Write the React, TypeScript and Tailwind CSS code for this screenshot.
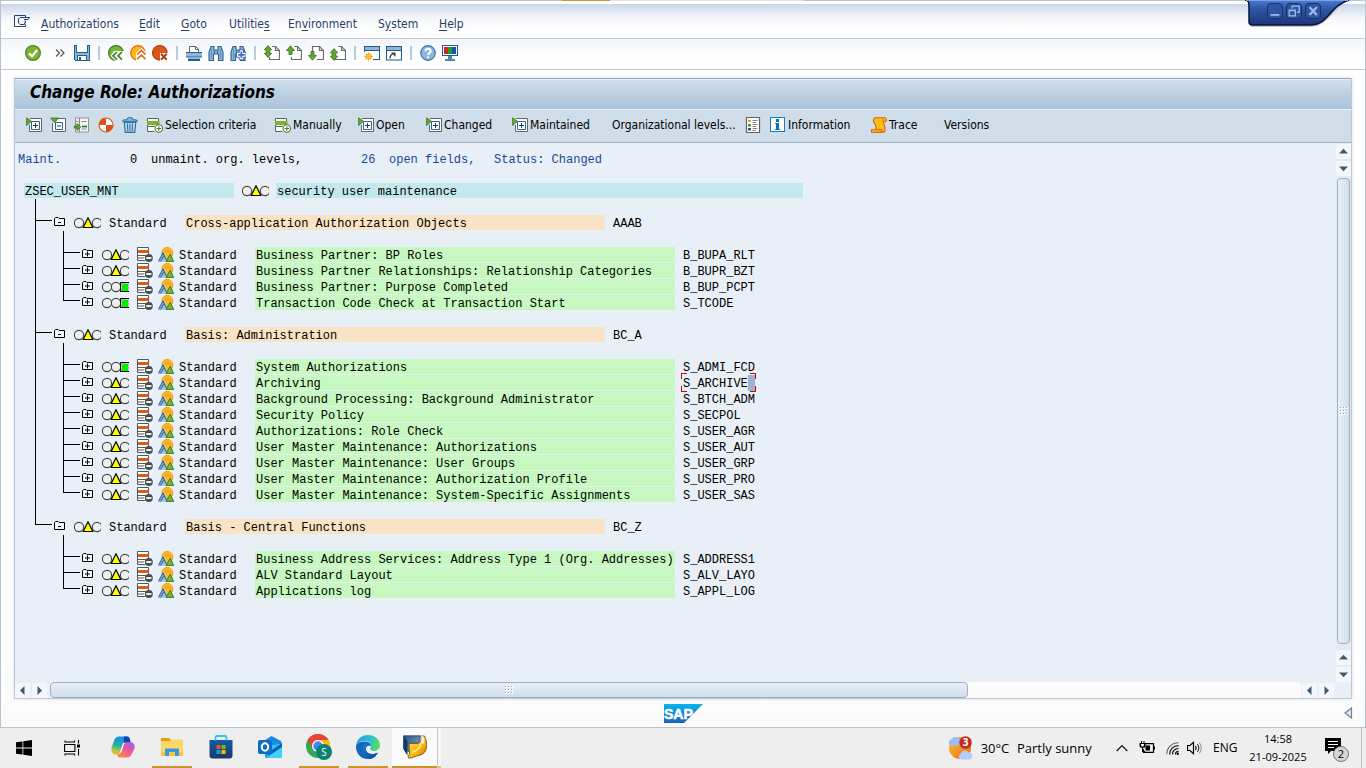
import type { ReactNode } from "react";

/* ---------- shared svg wrapper ---------- */

function Icon({ children, crisp, className = "size-4" }: { children: ReactNode; crisp?: boolean; className?: string }) {
  return (
    <svg viewBox="0 0 16 16" fill="none" shapeRendering={crisp ? "crispEdges" : "auto"} className={`block shrink-0 ${className}`} aria-hidden="true">
      {children}
    </svg>
  );
}

/* ---------- system toolbar icons ---------- */

const EnterIcon = () => (
  <Icon>
    <circle cx="8" cy="8" r="7.4" fill="#7ab32e" stroke="#4b8a2a" strokeWidth="1.2" />
    <path d="M4 8.3 7 11.2l5.200-6.200" stroke="#fff" strokeWidth="2.3" />
  </Icon>
);
const SaveIcon = () => (
  <Icon crisp>
    <path d="M0 0h16v16H1l-1-1z" fill="#1d5f93" />
    <path d="M1 1h2v7h10V1h2v14H1z" fill="#8fb5d8" />
    <path d="M3 0h10v7H3z" fill="#fff" />
    <path d="M2 0h1v8H2zM13 0h1v8h-1zM2 7h12v1H2zM3 10h10v6H3z" fill="#1d5f93" />
    <path d="M4 11h8v4H4z" fill="#fff" />
    <path d="M5 12h2v3H5z" fill="#1d5f93" />
  </Icon>
);
const BackIcon = () => (
  <Icon>
    <circle cx="8" cy="8" r="7.4" fill="#7ab32e" stroke="#3f7d2c" strokeWidth="1.2" />
    <path d="M6 6h10v10H7.500L2.500 11z" fill="#fff" />
    <path d="M9 7 5 10.800 9 14.600M14 7l-4 3.800 4 3.800" stroke="#3f7d2c" strokeWidth="1.7" />
  </Icon>
);
const ExitIcon = () => (
  <Icon>
    <circle cx="8" cy="8" r="7.3" fill="#fdb913" stroke="#e0661a" strokeWidth="1.2" />
    <path d="M6 8l5.5-5L16 7v9H6z" fill="#fff" />
    <path d="M7.2 9.5 11.5 5.5l4 4M7.2 14.2l4.3-4 4 4" stroke="#e0661a" strokeWidth="1.7" />
  </Icon>
);
const CancelIcon = () => (
  <Icon>
    <circle cx="7.8" cy="7.8" r="7.3" fill="#dc561a" stroke="#b03d12" strokeWidth="1.1" />
    <path d="M8 8h8v8H8z" fill="#fff" />
    <path d="m9 8.700 5.700 6M14.700 8.700l-5.700 6" stroke="#b03d12" strokeWidth="2" />
  </Icon>
);
const PrintIcon = () => (
  <Icon>
    <path d="M3.500 7V1.500h6L12.500 4v3" fill="#fff" stroke="#666" />
    <path d="M9.500 1.500v3h3" stroke="#666" />
    <path d="M0 8h16v4H0z" fill="#8fb5d8" />
    <path d="M0 7.500h16M0 12h16" stroke="#1d5f93" strokeWidth="1" />
    <path d="M2 15h12" stroke="#1d5f93" strokeWidth="2" />
    <path d="M2 13.500h12" stroke="#8fb5d8" strokeWidth="1" />
  </Icon>
);
const Binoculars = () => (
  <>
    <path d="M1 15.5V7l2-5.5h3V5h4V1.5h3L15 7v8.500h-4.500V9h-5v6.500z" fill="#8fb5d8" stroke="#2b6496" strokeWidth="1.1" />
    <path d="M3.500 4v10M12.500 4v10" stroke="#5d92bf" />
    <path d="M6.500 5.500v3M9.500 5.500v3" stroke="#2b6496" />
  </>
);
const FindIcon = () => <Icon><Binoculars /></Icon>;
const FindNextIcon = () => (
  <Icon>
    <Binoculars />
    <path d="M9.300 4.800h4.200v2.500H16v5h-2.500v2.500H9.300v-2.500H6.500v-5h2.800z" fill="#fff" stroke="#2d4fa5" strokeWidth=".800" />
    <path d="M11.400 6.500v6.500M8.200 9.800h6.500" stroke="#3d68c0" strokeWidth="1.800" />
  </Icon>
);

function PageIcon({ up, down, side }: { up?: boolean; down?: boolean; side: "double" | "up" | "down" | "last" }) {
  return (
    <Icon>
      <path d={side === "down" ? "M4.500 7V1.500h7l4 4v9H9" : "M8 1.500h3.500l4 4v9h-10V12"} fill="#fff" stroke="#6b6b6b" strokeWidth="1.200" />
      <path d="M11.500 1.500v4h4" stroke="#6b6b6b" strokeWidth="1.200" />
      {side === "double" && <path d="M.400 4.800 4 .600l3.600 4.200H5.800v3.400h1.800L4 12.400.400 8.200h1.800V4.800z" fill="#6aa52c" stroke="#35752b" strokeWidth=".900" />}
      {side === "last" && <path d="M.400 7.800 4 3.600l3.600 4.200H5.800v3.400h1.800L4 15.400.400 11.200h1.800V7.800z" fill="#6aa52c" stroke="#35752b" strokeWidth=".900" />}
      {up && <path d="M.500 5.500 4.500 .800l4 4.700H6V9.500H3v-4z" fill="#6aa52c" stroke="#35752b" strokeWidth=".900" />}
      {down && <path d="M.500 10.500 4.500 15.200l4-4.700H6V6.500H3v4z" fill="#6aa52c" stroke="#35752b" strokeWidth=".900" />}
    </Icon>
  );
}
const SessionIcon = () => (
  <Icon>
    <path d="M.500 1.500h15v13H.500z" fill="#fff" stroke="#1d5f93" strokeWidth="1.100" />
    <path d="M1 2h14v3H1z" fill="#8fb5d8" />
    <path d="M1 5.500h14" stroke="#1d5f93" strokeWidth="1" />
    <path d="M0 7h9v9H0z" fill="#fff" />
    <path d="M4.500 7.500v8M.500 11.500h8M1.700 8.700l5.600 5.600M7.300 8.700l-5.600 5.600" stroke="#f59a0c" strokeWidth="1.300" />
    <circle cx="4.500" cy="11.500" r="2" fill="#ffc21a" />
  </Icon>
);
const ShortcutIcon = () => (
  <Icon>
    <path d="M.500 1.500h15v13.500H.500z" fill="#fff" stroke="#1d5f93" strokeWidth="1.100" />
    <path d="M1 2h14v3H1z" fill="#8fb5d8" />
    <path d="M1 5.500h14" stroke="#1d5f93" strokeWidth="1" />
    <path d="M4 13.500c0-2.500 1-4 3.500-4.800" stroke="#444" strokeWidth="1.400" />
    <path d="M5 7.500h4.500V12z" fill="#444" />
  </Icon>
);
const HelpIcon = () => (
  <Icon>
    <circle cx="8" cy="8" r="7.300" fill="#8fb5d8" stroke="#3d76a6" strokeWidth="1.200" />
    <path d="M5.500 6.200C5.500 3 10.700 3 10.700 6c0 2-2.600 2-2.600 4" stroke="#fff" strokeWidth="1.900" />
    <circle cx="8.100" cy="12.300" r="1.100" fill="#fff" />
  </Icon>
);
const LayoutIcon = () => (
  <Icon crisp>
    <path d="M0 0h16v11H0z" fill="#1d5f93" />
    <path d="M1 1h14v9H1z" fill="#fff" />
    <path d="M2 2h4v7H2z" fill="#d8201a" />
    <path d="M6 2h4v7H6z" fill="#27a022" />
    <path d="M10 2h4v7h-4z" fill="#1550c0" />
    <path d="M6 11h4v3H6zM3 14h10v2H3z" fill="#4b86b4" />
  </Icon>
);

/* ---------- application toolbar icons ---------- */

const ExpandIcon = () => (
  <Icon>
    <path d="M4 1.500h11.500v13H3.500V8" fill="#fff" stroke="#5f6468" strokeWidth="1" />
    <path d="M5.500 4.500h8v8h-8z" fill="#fff" stroke="#1d6aa5" strokeWidth="1" />
    <path d="M9.500 6v5M7 8.500h5" stroke="#15406e" strokeWidth="1" />
    <path d="M.600.800 5.500 4.300.600 8.500z" fill="#6aa52c" stroke="#35752b" strokeWidth=".800" />
  </Icon>
);
const CollapseIcon = () => (
  <Icon>
    <path d="M8 1.500h7.500v13h-13V6" fill="#fff" stroke="#5f6468" strokeWidth="1" />
    <path d="M5.500 5.500h7v7h-7z" fill="#fff" stroke="#1d6aa5" strokeWidth="1" />
    <path d="M7 9h4" stroke="#15406e" strokeWidth="1" />
    <path d="M.600 1h8L4.600 5.800z" fill="#6aa52c" stroke="#35752b" strokeWidth=".800" />
  </Icon>
);
const PositionIcon = () => (
  <Icon>
    <path d="M1.500 1h13v14h-13z" fill="#f5f7f8" stroke="#8b9298" strokeWidth="1" />
    <path d="M5.500 1v14M2 4.500h2.500M7.500 4.500h5M7.500 12h5" stroke="#888" strokeWidth="1.100" />
    <path d="M8 9.500h5" stroke="#35752b" strokeWidth="1.800" />
    <path d="M3 6.500 6.800 10 3 13.500V11H.500V9H3z" fill="#6aa52c" stroke="#35752b" strokeWidth=".900" />
  </Icon>
);
const TechIcon = () => (
  <Icon>
    <circle cx="8" cy="8" r="7" fill="#fff" stroke="#d9531a" strokeWidth="1.100" />
    <path d="M8 8V1a7 7 0 0 0-7 7zM8 8v7a7 7 0 0 0 7-7z" fill="#d9531a" />
  </Icon>
);
const TrashIcon = () => (
  <Icon>
    <path d="M2.300 5.500h11.400l-1 9.800H3.300z" fill="#c6dcee" stroke="#2b6fa5" strokeWidth="1.200" />
    <path d="M.500 4.300c0-1.400 2-1.600 4.500-1.600L5.800.800h4.400l.800 1.900c2.500 0 4.500.200 4.500 1.600z" fill="#8fb5d8" stroke="#2b6fa5" strokeWidth="1" />
    <path d="M5.500 6.500l.300 8M8 6.500v8M10.500 6.500l-.300 8" stroke="#2b6fa5" strokeWidth="1.100" />
  </Icon>
);
const InsertRowIcon = () => (
  <Icon>
    <path d="M1 1h10v13.500H1z" fill="#fff" />
    <path d="M11.500 4V1.500H.500V14.500h7" stroke="#5f6468" />
    <path d="M1 9.500h7" stroke="#5f6468" />
    <path d="M0 4h12.500v4H0z" fill="#7ab32e" />
    <circle cx="11.800" cy="11.500" r="3.700" fill="#fff" stroke="#3f7d2c" strokeWidth="1.100" />
    <path d="M11.800 9.300v4.400M9.600 11.500H14" stroke="#3f7d2c" strokeWidth="1.100" />
  </Icon>
);
const LegendIcon = () => (
  <Icon>
    <path d="M1.500.500h13v15h-13z" fill="#fff" stroke="#5f6468" strokeWidth="1.200" />
    <path d="M7.500 3.500h5M7.500 5.500h3.500M7.500 7.500h5M7.500 9.500h3.500M7.500 11.500h5M7.500 13.500h3.500" stroke="#777" strokeWidth=".900" />
    <path d="m3.500 3 2 2M5.500 3l-2 2" stroke="#c98a08" strokeWidth="1.200" />
    <path d="M3 7h3v2.500H3z" fill="#3f9a2c" />
    <path d="M3 11h3v2.500H3z" fill="#1d5f93" />
  </Icon>
);
const InfoIcon = () => (
  <Icon crisp>
    <path d="M0 0h15v15H0z" fill="#1282c4" />
    <path d="M1 1h13v13H1z" fill="#fff" />
    <path d="M6 2h3v3H6zM5 6h4v6h1v1H5v-1h1V7H5z" fill="#0f72b2" />
  </Icon>
);
const TraceIcon = () => (
  <Icon>
    <path d="M4.500 12.500C6.500 9 3.500 7 2.500 4.500 2 2 3.500.800 5 .800h8.500c2.500 0 2.500 3.900 0 3.900h-1c0 3 2.500 5 1.300 9.300-.300 1-1 1.200-2 1.200H2" fill="#fdbe12" stroke="#d3611a" strokeWidth="1.100" />
    <path d="M.500 12.800h9.500c1 0 1 2.400 0 2.400H.500z" fill="#fdbe12" stroke="#d3611a" strokeWidth="1.100" />
    <path d="M12.500 4.500c-1-.500-1-2 0-2" stroke="#d3611a" strokeWidth="1" />
  </Icon>
);

/* ---------- tree icons ---------- */

function FolderIcon({ open }: { open: boolean }) {
  return (
    <svg viewBox="0 0 11 9" className="block h-[9px] w-[11px]" fill="none" aria-hidden="true">
      <path d="M.500 8.500V1.500l1-1h2.500l1 1h5.500v7z" fill="#f3f7fb" stroke="#000" />
      <path d={open ? "M4 5.500h3" : "M3 5h5M5.500 2.500v5"} stroke="#000" />
    </svg>
  );
}

type Light = "yellow" | "green";

function Lights({ state }: { state: Light }) {
  return (
    <svg viewBox="0 0 27 12" className="block h-3 w-[27px] shrink-0" role="img" aria-label={state}>
      <circle cx="5" cy="6" r="4.600" fill="#eef0ee" stroke="#444" strokeWidth="1.100" />
      {state === "green" ? (
        <>
          <circle cx="14" cy="6" r="4.600" fill="#eef0ee" stroke="#444" strokeWidth="1.100" />
          <path d="M18 1h9v10h-9z" fill="#b9c4b9" />
          <path d="M20 3h6v7h-6z" fill="#00f000" />
          <path d="M18.500 11V1.500H27M18 10.500h9" stroke="#000" fill="none" />
        </>
      ) : (
        <>
          <circle cx="23" cy="6" r="4.600" fill="#eef0ee" stroke="#444" strokeWidth="1.100" />
          <path d="M14 .800 18.800 10.500H9.200z" fill="#ffff00" stroke="#000" strokeWidth="1.200" />
        </>
      )}
    </svg>
  );
}
const RemoveRowIcon = () => (
  <Icon>
    <path d="M.600.600h11v13H.600z" fill="#fff" />
    <path d="M8 13.500H.500V.500h11v8M1 8.500h8M1 11h6" stroke="#55595c" />
    <path d="M1 3h10.500v3H1z" fill="#dc561a" />
    <circle cx="11.800" cy="11" r="4" fill="#4b4e50" />
    <path d="M9.200 11h5.200" stroke="#fff" strokeWidth="1.800" />
  </Icon>
);
const OrgIcon = () => (
  <Icon>
    <circle cx="9.300" cy="5.900" r="5.500" fill="#fdb913" stroke="#ef9a1c" strokeWidth="1" />
    <path d="M5.500 7.500a4 4 0 0 1 7.500-1.500" stroke="#ef8f1c" strokeWidth="1" />
    <path d="M.500 15 5.500 4.500l5 10.500z" fill="#9ec3e0" stroke="#e8eff6" strokeWidth=".600" />
    <path d="M.500 14.500 5 6l3.500 7M2.500 14.500 6 8.500" stroke="#2b6496" strokeWidth="1.100" />
    <path d="m8 14.500 4.300-7.500 3.400 7.500z" fill="#7ab32e" stroke="#3f7d2c" strokeWidth="1" />
  </Icon>
);

/* ---------- data ---------- */

type Item = { text: string; code: string; light: Light; focused?: boolean };
type Group = { text: string; code: string; items: Item[] };

const groups: Group[] = [
  {
    text: "Cross-application Authorization Objects",
    code: "AAAB",
    items: [
      { text: "Business Partner: BP Roles", code: "B_BUPA_RLT", light: "yellow" },
      { text: "Business Partner Relationships: Relationship Categories", code: "B_BUPR_BZT", light: "yellow" },
      { text: "Business Partner: Purpose Completed", code: "B_BUP_PCPT", light: "green" },
      { text: "Transaction Code Check at Transaction Start", code: "S_TCODE", light: "green" },
    ],
  },
  {
    text: "Basis: Administration",
    code: "BC_A",
    items: [
      { text: "System Authorizations", code: "S_ADMI_FCD", light: "green" },
      { text: "Archiving", code: "S_ARCHIVE", light: "yellow", focused: true },
      { text: "Background Processing: Background Administrator", code: "S_BTCH_ADM", light: "yellow" },
      { text: "Security Policy", code: "S_SECPOL", light: "yellow" },
      { text: "Authorizations: Role Check", code: "S_USER_AGR", light: "yellow" },
      { text: "User Master Maintenance: Authorizations", code: "S_USER_AUT", light: "yellow" },
      { text: "User Master Maintenance: User Groups", code: "S_USER_GRP", light: "yellow" },
      { text: "User Master Maintenance: Authorization Profile", code: "S_USER_PRO", light: "yellow" },
      { text: "User Master Maintenance: System-Specific Assignments", code: "S_USER_SAS", light: "yellow" },
    ],
  },
  {
    text: "Basis - Central Functions",
    code: "BC_Z",
    items: [
      { text: "Business Address Services: Address Type 1 (Org. Addresses)", code: "S_ADDRESS1", light: "yellow" },
      { text: "ALV Standard Layout", code: "S_ALV_LAYO", light: "yellow" },
      { text: "Applications log", code: "S_APPL_LOG", light: "yellow" },
    ],
  },
];

/* ---------- tree ---------- */

type RailKind = "through" | "end" | "none";

function Rail({ kind }: { kind: RailKind }) {
  if (kind === "none") return <span className="w-px shrink-0" />;
  return <span className={kind === "through" ? "h-4 w-px shrink-0 bg-black" : "h-1.5 w-px shrink-0 bg-black"} />;
}

function Branch({ open, label }: { open: boolean; label: string }) {
  return (
    <>
      <span className="mt-[5px] h-px w-4 shrink-0 bg-black" />
      <button type="button" aria-label={label} className="ml-0.5 mt-0.5 shrink-0">
        <FolderIcon open={open} />
      </button>
    </>
  );
}

function BlankRow({ outer, inner }: { outer: RailKind; inner: RailKind }) {
  return (
    <div className="flex h-4 items-start pl-[17px]">
      <Rail kind={outer} />
      <span className="w-[27px] shrink-0" />
      <Rail kind={inner} />
    </div>
  );
}

function Code({ item }: { item: Item }) {
  if (!item.focused) return <span className="ml-2">{item.code}</span>;
  return (
    <span className="relative ml-2 flex h-4">
      {item.code}
      <span className="h-4 w-[7px] bg-[#9bb3d4]" />
      <span className="absolute -left-0.5 -top-0.5 h-1.5 w-1.5 border-l border-t border-[#d40000]" />
      <span className="absolute -bottom-px -left-0.5 h-1.5 w-1.5 border-b border-l border-[#d40000]" />
      <span className="absolute -right-px -top-0.5 h-1.5 w-1.5 border-r border-t border-[#d40000]" />
      <span className="absolute -bottom-px -right-px h-1.5 w-1.5 border-b border-r border-[#d40000]" />
    </span>
  );
}

function GroupRows({ group, last }: { group: Group; last: boolean }) {
  const outer: RailKind = last ? "none" : "through";
  return (
    <li>
      <div className="flex h-4 items-start pl-[17px]">
        <Rail kind={last ? "end" : "through"} />
        <Branch open label={`Collapse ${group.text}`} />
        <span className="ml-[9px] mt-0.5"><Lights state="yellow" /></span>
        <span className="ml-2 w-[76px] shrink-0">Standard</span>
        <span className="h-[15px] w-[420px] shrink-0 bg-[#fae3c5] pl-px">{group.text}</span>
        <span className="ml-2">{group.code}</span>
      </div>
      <BlankRow outer={outer} inner="through" />
      <ul>
        {group.items.map((item, i) => (
          <li key={item.code} className="flex h-4 items-start pl-[17px]">
            <Rail kind={outer} />
            <span className="w-[27px] shrink-0" />
            <Rail kind={i === group.items.length - 1 ? "end" : "through"} />
            <Branch open={false} label={`Expand ${item.text}`} />
            <span className="ml-[9px] mt-0.5"><Lights state={item.light} /></span>
            <span className="ml-2"><RemoveRowIcon /></span>
            <span className="ml-[5px]"><OrgIcon /></span>
            <span className="ml-[5px] w-[76px] shrink-0">Standard</span>
            <span className="h-[15px] w-[420px] shrink-0 bg-[#c6f8c0] pl-px">{item.text}</span>
            <Code item={item} />
          </li>
        ))}
      </ul>
      {!last && <BlankRow outer="through" inner="none" />}
    </li>
  );
}

function Tree() {
  return (
    <div className="flex-1 overflow-hidden whitespace-pre pl-[3px] pt-2 font-['Liberation_Mono','Courier_New',monospace] text-[12px] leading-[18px] text-black">
      <p className="flex h-4 text-[#17499a]">
        <span className="w-28">Maint.</span>
        <span className="w-[21px] text-black">0</span>
        <span className="w-[210px] text-black">unmaint. org. levels,</span>
        <span className="w-7">26</span>
        <span className="w-[105px]">open fields,</span>
        <span>Status: Changed</span>
      </p>
      <div className="mt-4 flex h-4 items-start pl-1.5">
        <span className="h-[15px] w-[210px] bg-[#c4e9ec] pl-px">ZSEC_USER_MNT</span>
        <span className="ml-2 mt-0.5"><Lights state="yellow" /></span>
        <span className="ml-[7px] h-[15px] w-[527px] bg-[#c4e9ec] pl-px">security user maintenance</span>
      </div>
      <BlankRow outer="through" inner="none" />
      <ul>
        {groups.map((g, i) => (
          <GroupRows key={g.code} group={g} last={i === groups.length - 1} />
        ))}
      </ul>
    </div>
  );
}

/* ---------- scroll bars ---------- */

function Arrow({ dir }: { dir: "up" | "down" | "left" | "right" }) {
  const d = {
    up: "M3 9.500 7.500 4.800 12 9.500z",
    down: "M3 5.500l4.500 4.700L12 5.500z",
    left: "M9.500 3v9L5 7.500z",
    right: "M5.500 3v9L10 7.500z",
  }[dir];
  return (
    <button type="button" aria-label={`Scroll ${dir}`} className="shrink-0 bg-[#f3f7fb]">
      <svg viewBox="0 0 15 15" className="block size-[15px]" aria-hidden="true"><path d={d} fill="#44596d" /></svg>
    </button>
  );
}

function Grip() {
  return (
    <svg viewBox="0 0 8 8" className="block size-2" shapeRendering="crispEdges" aria-hidden="true">
      <path d="M0 0h2v2H0zM3 0h2v2H3zM6 0h2v2H6zM0 3h2v2H0zM3 3h2v2H3zM6 3h2v2H6zM0 6h2v2H0zM3 6h2v2H3zM6 6h2v2H6z" fill="#fff" />
      <path d="M0 0h1v1H0zM3 0h1v1H3zM6 0h1v1H6zM0 3h1v1H0zM3 3h1v1H3zM6 3h1v1H6zM0 6h1v1H0zM3 6h1v1H3zM6 6h1v1H6z" fill="#8fa3b6" />
    </svg>
  );
}

/* ---------- menus and tool bars ---------- */

const menus: { before: string; key: string; after: string; width: string }[] = [
  { before: "", key: "A", after: "uthorizations", width: "w-[98px]" },
  { before: "", key: "E", after: "dit", width: "w-[42px]" },
  { before: "", key: "G", after: "oto", width: "w-12" },
  { before: "Utilitie", key: "s", after: "", width: "w-[59px]" },
  { before: "En", key: "v", after: "ironment", width: "w-[90px]" },
  { before: "S", key: "y", after: "stem", width: "w-[61px]" },
  { before: "", key: "H", after: "elp", width: "w-12" },
];

function Tool({ label, children }: { label: string; children: ReactNode }) {
  return <button type="button" aria-label={label} className="shrink-0">{children}</button>;
}

const Separator = () => <span className="mx-0.5 h-3.5 w-[2px] shrink-0 bg-[#b7cbe0]" />;

function SystemToolbar() {
  return (
    <div role="toolbar" className="flex h-[31px] items-center border-b border-[#c3c9d4] bg-gradient-to-b from-[#f2f5fa] to-white to-70% pl-6 pb-0.5">
      <Tool label="Enter"><EnterIcon /></Tool>
      <button type="button" aria-label="Command field" className="ml-3.5 mr-[9px] shrink-0">
        <svg viewBox="0 0 10 8" className="block h-2 w-[10px]" fill="none" aria-hidden="true"><path d="m1 .500 3.500 3.500L1 7.500M5.500.500 9 4 5.500 7.500" stroke="#555" strokeWidth="1.200" /></svg>
      </button>
      <Tool label="Save"><SaveIcon /></Tool>
      <div className="flex items-center gap-1.5 pl-1.5">
        <Separator />
        <Tool label="Back"><BackIcon /></Tool>
        <Tool label="Exit"><ExitIcon /></Tool>
        <Tool label="Cancel"><CancelIcon /></Tool>
        <Separator />
        <Tool label="Print"><PrintIcon /></Tool>
        <Tool label="Find"><FindIcon /></Tool>
        <Tool label="Find next"><FindNextIcon /></Tool>
        <Separator />
        <Tool label="First page"><PageIcon side="double" /></Tool>
        <Tool label="Previous page"><PageIcon side="up" up /></Tool>
        <Tool label="Next page"><PageIcon side="down" down /></Tool>
        <Tool label="Last page"><PageIcon side="last" /></Tool>
        <Separator />
        <Tool label="New session"><SessionIcon /></Tool>
        <Tool label="Create shortcut"><ShortcutIcon /></Tool>
        <Separator />
        <Tool label="Help"><HelpIcon /></Tool>
        <Tool label="Customize layout"><LayoutIcon /></Tool>
      </div>
    </div>
  );
}

const iconActions = [
  { label: "Expand", icon: <ExpandIcon /> },
  { label: "Collapse", icon: <CollapseIcon /> },
  { label: "Position", icon: <PositionIcon /> },
  { label: "Technical names", icon: <TechIcon /> },
  { label: "Delete", icon: <TrashIcon /> },
];

const actions: { label?: string; name?: string; icon?: ReactNode; width: string }[] = [
  { label: "Selection criteria", icon: <InsertRowIcon />, width: "w-32" },
  { label: "Manually", icon: <InsertRowIcon />, width: "w-[83px]" },
  { label: "Open", icon: <ExpandIcon />, width: "w-[68px]" },
  { label: "Changed", icon: <ExpandIcon />, width: "w-[86px]" },
  { label: "Maintained", icon: <ExpandIcon />, width: "w-[100px]" },
  { label: "Organizational levels...", width: "w-[133px]" },
  { name: "Legend", icon: <LegendIcon />, width: "w-[25px]" },
  { label: "Information", icon: <InfoIcon />, width: "w-[101px]" },
  { label: "Trace", icon: <TraceIcon />, width: "w-[73px]" },
  { label: "Versions", width: "w-16" },
];

function AppToolbar() {
  return (
    <div role="toolbar" className="flex h-[34px] items-center border-b border-t border-b-[#a3b4c6] border-t-[#e9f1f8] bg-[#cfdde8] pb-0.5 pl-[11px] text-black">
      <div className="flex pr-px">
        {iconActions.map((a) => (
          <button key={a.label} type="button" aria-label={a.label} className="w-6 shrink-0">{a.icon}</button>
        ))}
      </div>
      {actions.map((a) => (
        <button key={a.label ?? a.name} type="button" aria-label={a.name} className={`flex shrink-0 items-center gap-0.5 whitespace-nowrap ${a.width}`}>
          {a.icon}
          {a.label}
        </button>
      ))}
    </div>
  );
}

function WindowControls() {
  return (
    <div className="absolute right-3 top-0 h-7 w-[108px]">
      <svg viewBox="0 0 108 28" className="absolute inset-0 block h-7 w-[108px]" aria-hidden="true">
        <defs>
          <linearGradient id="ctl" x1="0" y1="0" x2="0" y2="1">
            <stop offset="0" stopColor="#4b7bd0" />
            <stop offset=".35" stopColor="#2f56a8" />
            <stop offset="1" stopColor="#1c3678" />
          </linearGradient>
        </defs>
        <path d="M0 1c5 0 4 4 4 8v15q0 3 4 3h57c16 0 19-13 36-25z" fill="#9aa5b8" opacity=".6" />
        <path d="M0 0c4 0 4 3 4 7v15q0 3 4 3h57C84 25 84 6 104 0z" fill="url(#ctl)" stroke="#0a1430" strokeWidth="1.500" />
        <path d="M1 .500h102" stroke="#7ba2e6" />
      </svg>
      <div className="relative flex gap-[3px] pl-[22px] pt-[3px]">
        <button type="button" aria-label="Minimize" className="size-4 rounded-sm border border-[#1a2f66] bg-[#2f559f]">
          <Icon className="size-3.5"><path d="M3 12.500h10" stroke="#9dbcf5" strokeWidth="2" /></Icon>
        </button>
        <button type="button" aria-label="Restore" className="size-4 rounded-sm border border-[#1a2f66] bg-[#2f559f]">
          <Icon className="size-3.5"><path d="M2.500 7h7v6.500h-7zM2 7.500h8M6 5V2.500h8v7h-2.500" stroke="#9dbcf5" strokeWidth="1.500" /></Icon>
        </button>
        <button type="button" aria-label="Close" className="size-4 rounded-sm border border-[#1a2f66] bg-[#2f559f]">
          <Icon className="size-3.5"><path d="m4 3.500 8.500 9M12.500 3.500l-8.500 9" stroke="#9dbcf5" strokeWidth="2.600" /></Icon>
        </button>
      </div>
    </div>
  );
}

/* ---------- task bar ---------- */

const WindowsLogo = () => <Icon><path d="M0 2.300 6.500 1.400v6.200H0zM7.300 1.300 16 0v7.600H7.300zM0 8.400h6.500v6.200L0 13.700zM7.300 8.400H16V16l-8.700-1.300z" fill="#000" /></Icon>;
const TaskViewIcon = () => (
  <Icon>
    <path d="M.600 4.500h10.300v7H.600zM1 .500V2h9.500V.500M1 15.500V14h9.500v1.500M14.500 0v3.500M14.500 9v6.500" stroke="#000" strokeWidth="1.100" />
    <path d="M13 4.500h3v3h-3z" fill="#000" />
  </Icon>
);
const CopilotIcon = () => (
  <svg viewBox="0 0 24 22" className="block h-[22px] w-6" aria-hidden="true">
    <defs>
      <linearGradient id="cpa" x1=".4" y1="0" x2=".2" y2="1"><stop offset="0" stopColor="#1290e8" /><stop offset=".5" stopColor="#2bb0a0" /><stop offset=".8" stopColor="#b9c83c" /><stop offset="1" stopColor="#f3b82a" /></linearGradient>
      <linearGradient id="cpb" x1=".8" y1="0" x2=".3" y2="1"><stop offset="0" stopColor="#a65be8" /><stop offset=".5" stopColor="#f0569a" /><stop offset="1" stopColor="#fb8a4a" /></linearGradient>
    </defs>
    <path d="M8 .500h8c2 0 2.500 1.500 3 3.500l.700 2.500H15c-2 0-3 1-3.500 3L9.500 16c-.500 1.500-1.500 2.500-3 2.500H3C.500 16.500 0 14 .500 11.500L3.500 3.500C4.500 1.500 6 .500 8 .500z" fill="url(#cpa)" />
    <path d="M13 .500h3c2 0 2.500 1.500 3 3.500l.700 2.500H15c-1 0-1.800.300-2.400.900z" fill="#1b3fb5" />
    <path d="M16 21.500H9c-2 0-2.500-1.500-3-3h1c1.500 0 2.500-1 3-2.500L12 9c.500-1.600 1.500-2.500 3-2.500h6c2.500 1 3 3.500 2.500 6l-3 6c-1 2-2.500 3-4.500 3z" fill="url(#cpb)" />
    <path d="M12.500 6.800h2c-1.500 1-2 2.500-2.700 5-.800 2.800-1.500 4.700-3.300 5.500 1.500-3 2-7.500 4-10.500z" fill="#fff" />
  </svg>
);
const ExplorerIcon = () => (
  <svg viewBox="0 0 22 18" className="block h-[18px] w-[22px]" aria-hidden="true">
    <path d="M0 1q0-1 1-1h7l2 2v4H0z" fill="#e2a010" />
    <path d="M0 3h9l1.500-1.500H21q1 0 1 1V17H0z" fill="#fdd668" />
    <path d="M0 14h22v4H0z" fill="#f8c63f" />
    <path d="M4 18v-6.500q0-1 1-1h12q1 0 1 1V18h-4v-4H8v4z" fill="#3b98dd" />
  </svg>
);
const StoreIcon = () => (
  <svg viewBox="0 0 24 24" className="block size-6" aria-hidden="true">
    <defs><linearGradient id="st" x1="0" y1="0" x2="0" y2="1"><stop offset="0" stopColor="#0f5fa8" /><stop offset="1" stopColor="#1f3763" /></linearGradient></defs>
    <path d="M.500 5h23v15.500q0 3-3 3h-17q-3 0-3-3z" fill="url(#st)" />
    <path d="M6.500 5.500v-3Q6.500 1 8 1h8q1.500 0 1.500 1.500v3" fill="none" stroke="#35c3f3" strokeWidth="1.800" />
    <path d="M7.500 10h4v4h-4z" fill="#f25022" /><path d="M12.500 10h4v4h-4z" fill="#7fba00" /><path d="M7.500 15h4v4h-4z" fill="#00a4ef" /><path d="M12.500 15h4v4h-4z" fill="#ffb900" />
  </svg>
);
const OutlookIcon = () => (
  <svg viewBox="0 0 24 22" className="block h-[22px] w-6" aria-hidden="true">
    <path d="M4 6 13.500 0 23 5l1 3v12q0 2-2 2H9q-2 0-2-2V6z" fill="#1a8be0" />
    <path d="M10 10 24 7.500V20q0 2-2 2H9z" fill="#31c5f4" />
    <path d="M24 7 13 14.500l-3-1.500V20L24 12z" fill="#0d5fb5" />
    <path d="M24 11 9 21.500q1 .500 3 .500h10q2 0 2-2z" fill="#3fd0fa" />
    <path d="M0 6q0-2 2-2h10q2 0 2 2v10q0 2-2 2H2q-2 0-2-2z" fill="#0f6cc8" />
    <ellipse cx="7" cy="11" rx="3.200" ry="3.700" fill="none" stroke="#fff" strokeWidth="2" />
  </svg>
);
const ChromeIcon = () => (
  <svg viewBox="0 0 26 26" className="block size-[26px]" aria-hidden="true">
    <circle cx="12" cy="12" r="12" fill="#34a853" />
    <path d="M12 6h10.400A12 12 0 0 1 12 24l5.200-9z" fill="#fbbc04" />
    <path d="M1.600 6A12 12 0 0 1 22.400 6H12a6 6 0 0 0-5.200 9z" fill="#ea4335" />
    <circle cx="12" cy="12" r="6" fill="#fff" /><circle cx="12" cy="12" r="4.700" fill="#4285f4" />
    <circle cx="18" cy="18" r="8" fill="#0b8270" />
    <text x="18" y="21.500" textAnchor="middle" fill="#fff" fontSize="10" fontFamily="Open Sans, sans-serif">S</text>
  </svg>
);
const EdgeIcon = () => (
  <svg viewBox="0 0 24 24" className="block size-6" aria-hidden="true">
    <defs>
      <linearGradient id="eda" x1="0" y1=".3" x2="1" y2=".5"><stop offset="0" stopColor="#1b9de2" /><stop offset=".6" stopColor="#2fc3c9" /><stop offset="1" stopColor="#5fdc5a" /></linearGradient>
      <linearGradient id="edb" x1="0" y1="0" x2="1" y2="1"><stop offset="0" stopColor="#1b80d8" /><stop offset="1" stopColor="#0b4592" /></linearGradient>
    </defs>
    <path d="M0 11C.500 4.500 5.500 0 12 0c7 0 12 4.500 12 10 0 3.500-2.500 6-6 6-2.500 0-4-1-4-1.700 0-.500 1-1 1-3C15 8.500 12.500 6 8.500 6 4.500 6 1 8 0 11z" fill="url(#eda)" />
    <path d="M0 11C1.200 7.500 5 6.500 8.500 6.500c3.500 0 6.500 2 6.500 4.800-1-1-3-1.300-4.300.200C9 13.500 9.500 19 16 19c3 0 4.500-1 5.800-1.300C20 21.500 16.500 24 12 24 5 24-.300 18.500 0 11z" fill="#1565b8" />
    <path d="M8 9.500C5 13 6 21 13.500 23.900 18 23.500 20.500 20.500 21.800 17.700 20.500 18 19 19 16 19c-6.500 0-7-5.500-5.300-7.500C12 10 14 10.300 15 11.300 14.500 8.500 10.500 7.500 8 9.500z" fill="url(#edb)" />
  </svg>
);
const SapGuiIcon = () => (
  <svg viewBox="0 0 24 24" className="block size-6" aria-hidden="true">
    <defs>
      <linearGradient id="sgb" x1="0" y1="0" x2="1" y2="1"><stop offset="0" stopColor="#1f4e7c" /><stop offset="1" stopColor="#8fb6d8" /></linearGradient>
      <linearGradient id="sgy" x1="0" y1="0" x2="1" y2="1"><stop offset="0" stopColor="#ffdf6a" /><stop offset=".6" stopColor="#fbb40c" /><stop offset="1" stopColor="#b87406" /></linearGradient>
    </defs>
    <path d="M.500.800h16.500l-1 7H8v10l-7.500-4z" fill="url(#sgb)" stroke="#2a4560" strokeWidth=".800" />
    <path d="M.800 1 4.500 6.500v14L.800 15z" fill="#173a5f" />
    <path d="M6 8.500h8l2-.500c2-1.500 2.500-3.500 1.500-7l4 0c2.500 4.500 2.500 9.500 1.500 13.500-1.500 4.500-5.500 6-9.500 6.500L8 23H5.500L5 21.500 6.500 19z" fill="url(#sgy)" stroke="#7d5510" strokeWidth=".900" />
    <path d="M17.500 9c0 3-2.500 6-8.500 8.500" fill="none" stroke="#fff2b8" strokeWidth="1.200" />
    <path d="M17.800 1.200c1.200 3 .800 5.500-1 7.300h4c1-3 .800-5-.300-7.300z" fill="#e9ecef" />
  </svg>
);
const WeatherIcon = () => (
  <svg viewBox="0 0 26 24" className="block h-6 w-[26px]" aria-hidden="true">
    <defs><linearGradient id="sun" x1="0" y1="0" x2="1" y2="1"><stop offset="0" stopColor="#fdc02f" /><stop offset="1" stopColor="#ea6a1c" /></linearGradient></defs>
    <circle cx="13" cy="12" r="11" fill="url(#sun)" />
    <path d="M3.500 9.500a3 3 0 0 1 0-5.500A5.500 5.500 0 0 1 13 3.500a3.500 3.500 0 0 1 1 6z" fill="#9dbdf5" />
    <path d="M14 23.500a3 3 0 0 1-.500-5.500 4.500 4.500 0 0 1 8-1.500 3.500 3.500 0 0 1 .500 7z" fill="#b3ccfa" />
    <circle cx="18.500" cy="6.500" r="6.300" fill="#c42b22" />
    <text x="18.500" y="10" textAnchor="middle" fill="#fff" fontSize="10" fontWeight="bold" fontFamily="Open Sans, sans-serif">3</text>
  </svg>
);
const BatteryIcon = () => (
  <Icon>
    <path d="M6 3.600h8.500v8.800H4.500V9" stroke="#000" strokeWidth="1.200" />
    <path d="M15 6.500h1v3h-1zM6.500 5.500H11v5H6.500zM.500 3h6v2.500q0 2.500-3 2.500t-3-2.500zM2 1h1v2H2zM4.500 1h1v2h-1zM3 8h1v3h2v1H3z" fill="#000" />
    <path d="M2 4h3v1.500q0 1-1.500 1T2 5.500z" fill="#eee" />
  </Icon>
);
const WifiIcon = () => (
  <Icon className="size-[13px]">
    <path d="M1 15C1 7 7 1 15.500 1" stroke="#666" strokeWidth="1.300" />
    <path d="M4.500 15.500C4.500 9 9 4.500 15.500 4.500M8 15.500c0-4.500 3-7.500 7.500-7.500M11.500 15.500c0-2.500 1.500-4 4-4" stroke="#111" strokeWidth="1.400" />
    <circle cx="14.500" cy="14.500" r="1.500" fill="#000" />
  </Icon>
);
const SpeakerIcon = () => (
  <Icon>
    <path d="M.600 5.500H3L6.500 2.300v11.400L3 10.500H.600zM8.500 6q1.500 2 0 4" stroke="#000" strokeWidth="1.200" />
    <path d="M10.300 4q3 4 0 8" stroke="#333" strokeWidth="1.100" />
    <path d="M12.300 2.500q4 5.500 0 11" stroke="#999" strokeWidth="1.100" />
  </Icon>
);

const apps: { name: string; icon: ReactNode; running: boolean }[] = [
  { name: "Copilot", icon: <CopilotIcon />, running: false },
  { name: "File Explorer", icon: <ExplorerIcon />, running: true },
  { name: "Microsoft Store", icon: <StoreIcon />, running: false },
  { name: "Outlook", icon: <OutlookIcon />, running: false },
  { name: "Chrome", icon: <ChromeIcon />, running: true },
  { name: "Edge", icon: <EdgeIcon />, running: true },
];

function Taskbar() {
  return (
    <footer className="flex h-10 items-stretch bg-[#eeeeee] font-['Open_Sans','Noto_Sans',sans-serif] text-black">
      <nav className="flex">
        <div className="flex pr-0.5">
          <button type="button" aria-label="Start" className="flex w-12 shrink-0 items-center justify-center"><WindowsLogo /></button>
          <button type="button" aria-label="Task view" className="flex w-12 shrink-0 items-center justify-center"><TaskViewIcon /></button>
        </div>
        {apps.map((a) => (
          <button key={a.name} type="button" aria-label={a.name} className="flex w-[49px] shrink-0 flex-col items-center">
            <span className="flex flex-1 items-center">{a.icon}</span>
            <span className={a.running ? "h-0.5 w-10 bg-[#cd9330]" : "h-0.5 w-10"} />
          </button>
        ))}
        <button type="button" aria-label="SAP Logon" className="flex w-[46px] shrink-0 flex-col items-center border-r border-[#c9c9c9] bg-[#fafafa]">
          <span className="flex flex-1 items-center">
            <SapGuiIcon />
          </span>
          <span className="h-0.5 w-full bg-[#cd9330]" />
        </button>
        <span className="w-[3px] border-b-2 border-[#e3bd7c] bg-[#f6f6f6]" />
      </nav>
      <div className="ml-auto flex items-center">
        <button type="button" className="flex items-center gap-1.5 text-[13px] leading-5">
          <WeatherIcon />
          <span className="w-8">30°C</span>
          <span className="w-[99px] text-left">Partly sunny</span>
        </button>
        <button type="button" aria-label="Show hidden icons" className="w-[23px]">
          <svg viewBox="0 0 12 8" className="block h-2 w-3" fill="none" aria-hidden="true"><path d="m.700 7 5.300-5.500L11.300 7" stroke="#111" strokeWidth="1.200" /></svg>
        </button>
        <button type="button" aria-label="Battery" className="w-[27px]"><BatteryIcon /></button>
        <button type="button" aria-label="Network" className="w-[21px]"><WifiIcon /></button>
        <button type="button" aria-label="Volume" className="w-[26px]"><SpeakerIcon /></button>
        <button type="button" className="w-9 text-left text-[12px] leading-4">ENG</button>
        <p className="flex w-[58px] flex-col gap-0.5 text-center text-[11px] leading-4">
          <time>14:58</time>
          <time className="whitespace-nowrap">21-09-2025</time>
        </p>
        <button type="button" aria-label="2 notifications" className="relative ml-[18px] mr-3 h-6 w-6">
          <svg viewBox="0 0 16 16" className="absolute left-0 top-0.5 block size-4" aria-hidden="true">
            <path d="M0 0h16v13H6l-3 3v-3H0z" fill="#000" /><path d="M3 3.500h10M3 6.500h10M3 9.500h6" stroke="#fff" strokeWidth="1.200" />
          </svg>
          <span className="absolute -bottom-0.5 right-0 flex size-4 items-center justify-center rounded-full border border-[#777] bg-[#d5d5d5] text-[11px] leading-3">2</span>
        </button>
        <span className="h-full w-[5px] border-l border-[#c4c4c4]" />
      </div>
    </footer>
  );
}

/* ---------- page ---------- */

export default function App() {
  return (
    <div className="flex min-h-screen flex-col bg-white font-['DejaVu_Sans_Condensed','DejaVu_Sans',sans-serif] text-[12px] leading-4">
      <div className="relative flex flex-1 flex-col border-x border-b border-[#b9c2cf] bg-gradient-to-b from-white from-90% to-[#fafafa]">
        <div className="flex h-px justify-center bg-[#b9c4d4]">
          <span className="w-12 bg-[#d3922c]" />
          <span className="w-[194px] bg-[#e4e4e4]" />
        </div>
        <header className="mt-[3px] flex h-[35px] items-center border-b border-[#c5cbd6] bg-gradient-to-b from-[#cad7e8] via-[#f3f6f9] via-40% to-white to-70% pl-[13px] text-[#2a3d68]">
          <button type="button" aria-label="System menu" className="mr-[11px]">
            <svg viewBox="0 0 16 12" className="block h-3 w-4" fill="none" aria-hidden="true">
              <path d="M11.500 2.500v-2H.500v11h11v-2" stroke="#2a3d68" />
              <path d="M6 2.500h9.500L14 4.500h-4M6 2.500 4.500 4v4L6 9.500h4.500V8h1V6h-1" stroke="#2a3d68" />
            </svg>
          </button>
          <nav className="flex pt-[5px]">
            {menus.map((m) => (
              <button key={m.before + m.key + m.after} type="button" className={`text-left ${m.width}`}>
                {m.before}
                <u className="underline-offset-2">{m.key}</u>
                {m.after}
              </button>
            ))}
          </nav>
        </header>
        <WindowControls />
        <SystemToolbar />

        <main className="mx-[13px] mt-2 flex flex-1 flex-col border border-[#bcc8d8] border-t-[#93a8bf] bg-[#e8eff6] shadow-[0_0_3px_#d4dbe8]">
          <h1 className="flex h-[30px] items-center border-t border-[#e6eff8] bg-gradient-to-b from-[#d0e0ef] via-[#bccfdf] via-50% to-[#abc3dd] pb-1.5 pl-[15px] text-[17px] font-bold italic leading-5 text-black">
            Change Role: Authorizations
          </h1>
          <AppToolbar />
          <div className="flex flex-1">
            <Tree />
            <div className="flex w-[15px] shrink-0 flex-col gap-0.5 bg-[#e3eaf2] pt-px">
              <Arrow dir="up" />
              <Arrow dir="down" />
              <div className="mx-px mb-1 flex flex-1 items-center justify-center rounded-sm border border-[#9eb0c2] bg-gradient-to-r from-[#e9f1f8] to-[#d0dde9]">
                <Grip />
              </div>
              <Arrow dir="up" />
              <Arrow dir="down" />
            </div>
          </div>
          <div className="flex h-4 items-center pr-[17px]">
            <div className="flex gap-0.5 pr-[3px]">
              <Arrow dir="left" />
              <Arrow dir="right" />
            </div>
            <div className="flex h-4 flex-1 bg-[#fbfbfc]">
              <div className="flex w-[73.4%] items-center justify-center rounded-sm border border-[#9eb0c2] bg-gradient-to-b from-[#e9f1f8] to-[#d0dde9]">
                <Grip />
              </div>
            </div>
            <div className="flex gap-0.5 pl-px">
              <Arrow dir="left" />
              <Arrow dir="right" />
            </div>
          </div>
        </main>

        <div className="flex h-7 items-center justify-center px-3">
          <span className="w-[9px]" />
          <svg viewBox="0 0 39 19" className="mx-auto block h-[19px] w-[39px]" role="img" aria-label="SAP">
            <defs><linearGradient id="sap" x1="0" y1="0" x2="0" y2="1"><stop offset="0" stopColor="#06b4ee" /><stop offset="1" stopColor="#1d62bf" /></linearGradient></defs>
            <path d="M0 0h39L20 19H0z" fill="url(#sap)" />
            <text x="0" y="15" fill="#fff" stroke="#fff" strokeWidth=".6" fontSize="14" fontWeight="bold" fontFamily="Liberation Sans, Arial, sans-serif">SAP</text>
          </svg>
          <button type="button" aria-label="Show status">
            <svg viewBox="0 0 9 12" className="block h-3 w-[9px]" aria-hidden="true"><path d="M7.500 1v10L1 6z" fill="#dbe6f2" stroke="#6d8098" strokeWidth="1.200" /></svg>
          </button>
        </div>
      </div>
      <Taskbar />
    </div>
  );
}
